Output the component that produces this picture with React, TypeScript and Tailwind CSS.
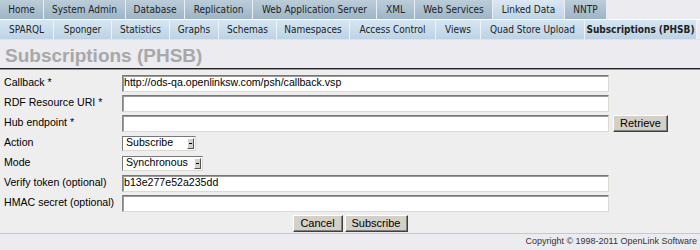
import React from "react";

type Tab = { label: string; width: string; active?: boolean };

const topTabs: Tab[] = [
  { label: "Home", width: "w-[44px]" },
  { label: "System Admin", width: "w-[82px]" },
  { label: "Database", width: "w-[59px]" },
  { label: "Replication", width: "w-[68px]" },
  { label: "Web Application Server", width: "w-[124px]" },
  { label: "XML", width: "w-[38px]" },
  { label: "Web Services", width: "w-[78px]" },
  { label: "Linked Data", width: "w-[72px]", active: true },
  { label: "NNTP", width: "w-[42px]" },
];

const subTabs: Tab[] = [
  { label: "SPARQL", width: "w-[54px]" },
  { label: "Sponger", width: "w-[58px]" },
  { label: "Statistics", width: "w-[58px]" },
  { label: "Graphs", width: "w-[49px]" },
  { label: "Schemas", width: "w-[58px]" },
  { label: "Namespaces", width: "w-[73px]" },
  { label: "Access Control", width: "w-[86px]" },
  { label: "Views", width: "w-[45px]" },
  { label: "Quad Store Upload", width: "w-[104px]" },
  { label: "Subscriptions (PHSB)", width: "w-[112px]", active: true },
];

const tabFont = "font-['DejaVu_Sans_Condensed','DejaVu_Sans',sans-serif] [font-stretch:condensed] text-[10px]";

const TextBox = ({ value = "", width = "w-[487px]" }: { value?: string; width?: string }) => (
  <div
    className={`${width} flex h-[17px] items-center border border-t-[#777] border-l-[#888] border-r-[#dcd9d2] border-b-[#dcd9d2] bg-white px-[1px] text-[10.6px] text-black shadow-[inset_1px_1px_0_#999]`}
  >
    {value}
  </div>
);

const SelectBox = ({ value, width }: { value: string; width: string }) => (
  <div
    className={`${width} flex h-[15px] items-center justify-between border border-t-[#777] border-l-[#777] border-r-[#dcd9d2] border-b-[#dcd9d2] bg-white pl-[3px] pr-[1px] text-[10.6px] text-black`}
  >
    <span>{value}</span>
    <span className="flex h-[11px] w-[7px] items-center justify-center border border-t-white border-l-white border-r-[#555] border-b-[#555] bg-[#d4d0c8]">
      <span className="h-[1px] w-[3px] bg-black" />
    </span>
  </div>
);

const Button = ({ children, width }: { children: React.ReactNode; width: string }) => (
  <button
    type="button"
    className={`${width} flex h-[17px] items-center justify-center border border-t-white border-l-white border-r-[#404040] border-b-[#404040] bg-[#d4d0c8] text-[11px] text-black shadow-[inset_-1px_-1px_0_#808080]`}
  >
    {children}
  </button>
);

const Row = ({ label, children }: { label: string; children: React.ReactNode }) => (
  <div className="flex h-[20px] items-center">
    <div className="w-[122px] shrink-0 whitespace-nowrap pl-[4px] text-[10.6px] text-black">{label}</div>
    <div className="flex items-center gap-[4px]">{children}</div>
  </div>
);

const App = () => {
  return (
    <div className="h-[250px] w-[700px] overflow-hidden bg-[#ebebf0] font-['Liberation_Sans',Arial,sans-serif]">
      <div className="flex h-[20px] border-b border-white">
        {topTabs.map((tab) => (
          <div
            key={tab.label}
            className={`${tab.width} ${tabFont} flex items-center justify-center border-r border-[#e8eef3] text-[#222] ${
              tab.active
                ? "bg-gradient-to-b from-[#dbe8f2] to-[#bdd4e6]"
                : "bg-gradient-to-b from-[#bccdd9] to-[#9db5c6]"
            }`}
          >
            {tab.label}
          </div>
        ))}
      </div>

      <div className="flex h-[20px] border-b border-[#dfe3e8]">
        {subTabs.map((tab) => (
          <div
            key={tab.label}
            className={`${tab.width} ${tabFont} flex items-center justify-center border-r border-[#eef3f7] text-[#222] ${
              tab.active
                ? "bg-gradient-to-b from-[#d6e6f1] to-[#bcd3e5] font-bold"
                : "bg-gradient-to-b from-[#d6e6f1] to-[#bcd3e5]"
            }`}
          >
            {tab.label}
          </div>
        ))}
      </div>

      <div className="flex h-[28px] items-end pb-[3px] pl-[5px] text-[19px] font-bold leading-none text-[#a8a8a8]">
        Subscriptions (PHSB)
      </div>
      <div className="h-[1px] bg-[#222]" />
      <div className="h-[1px] bg-[#999]" />

      <div className="flex flex-col bg-[#eeeeee] pt-[3px]">
        <Row label="Callback *">
          <TextBox value="http://ods-qa.openlinksw.com/psh/callback.vsp" />
        </Row>
        <Row label="RDF Resource URI *">
          <TextBox />
        </Row>
        <Row label="Hub endpoint *">
          <TextBox />
          <Button width="w-[55px]">Retrieve</Button>
        </Row>
        <Row label="Action">
          <SelectBox value="Subscribe" width="w-[74px]" />
        </Row>
        <Row label="Mode">
          <SelectBox value="Synchronous" width="w-[81px]" />
        </Row>
        <Row label="Verify token (optional)">
          <TextBox value="b13e277e52a235dd" />
        </Row>
        <Row label="HMAC secret (optional)">
          <TextBox />
        </Row>
        <div className="flex h-[20px] items-center justify-center gap-[2px]">
          <Button width="w-[50px]">Cancel</Button>
          <Button width="w-[63px]">Subscribe</Button>
        </div>
      </div>

      <div className="h-[1px] bg-[#c8c8cc]" />
      <div className="flex h-[16px] items-center justify-end pr-[3px] font-['Liberation_Sans_Narrow','Liberation_Sans',sans-serif] text-[9px] text-[#333]">
        Copyright © 1998-2011 OpenLink Software
      </div>
    </div>
  );
};

export default App;
